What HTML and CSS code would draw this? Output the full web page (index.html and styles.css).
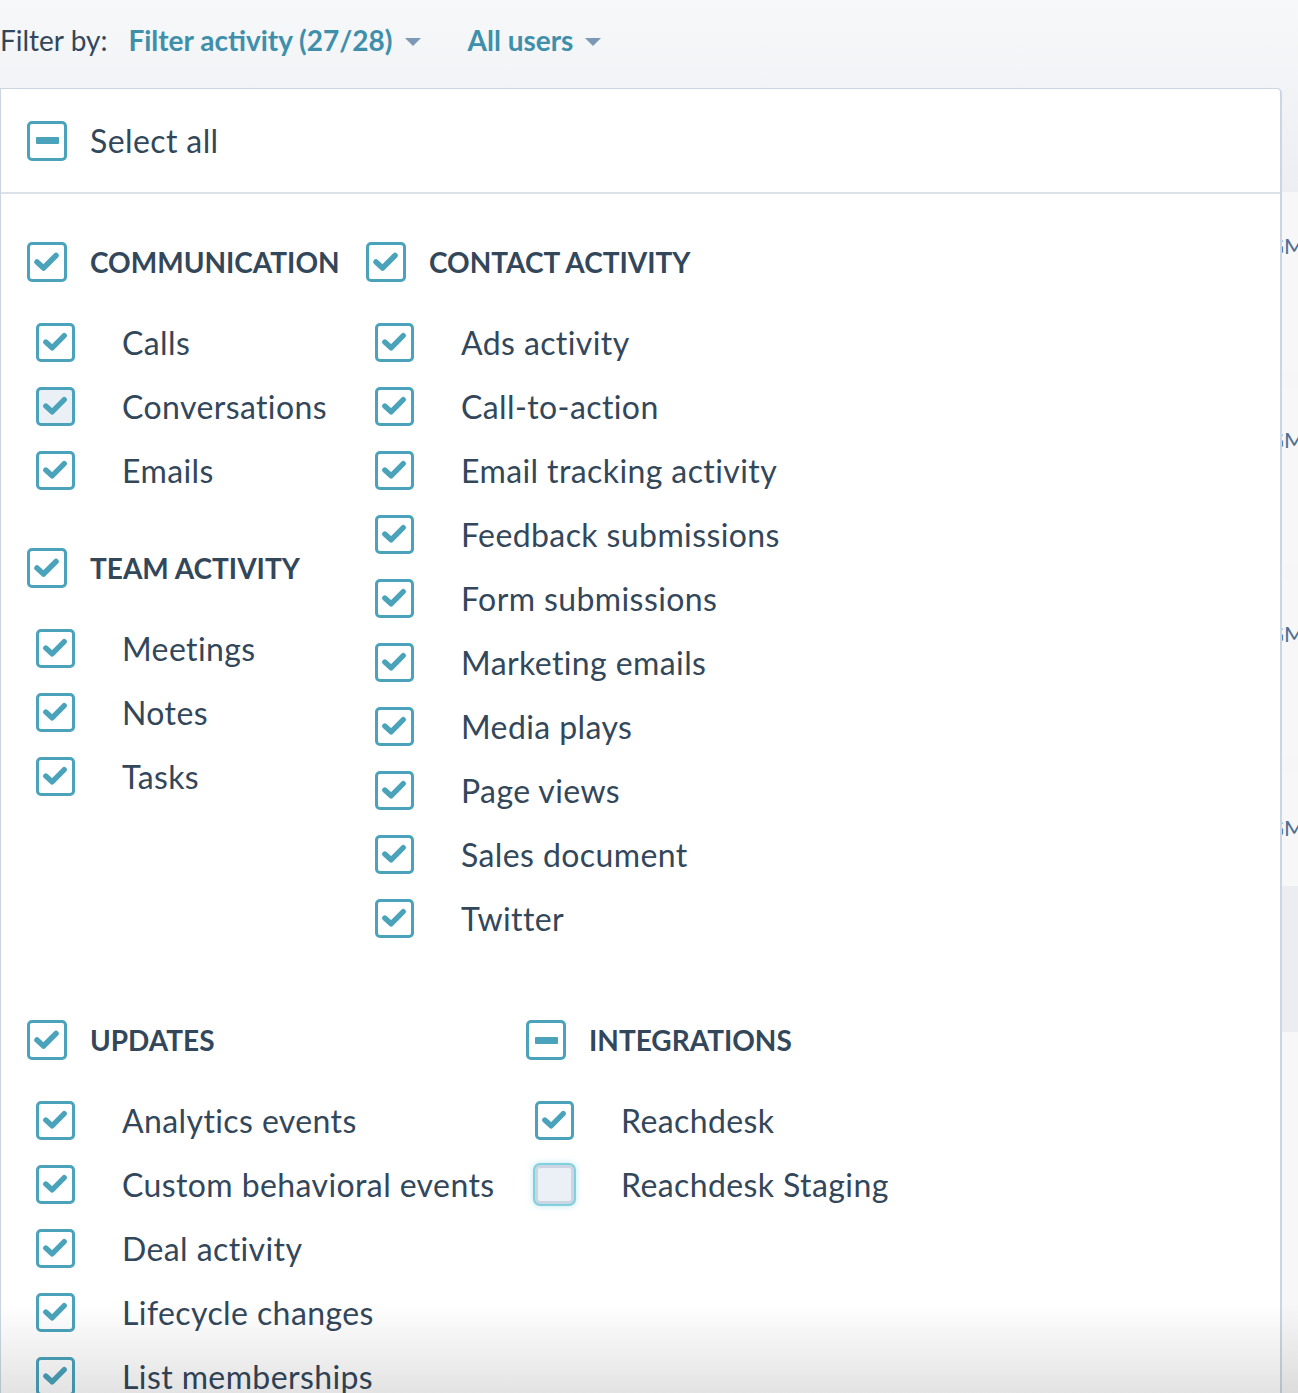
FILE: index.html
```html
<!DOCTYPE html>
<html lang="en">
<head>
    <meta charset="UTF-8">
    <meta name="viewport" content="width=device-width, initial-scale=1.0">
    <title>Activity filter</title>
    <link rel="stylesheet" href="styles.css">
</head>
<body>

    <!-- Filter Bar -->
    <div class="page-top">
        <div class="filter-bar">
            <span class="filter-label">Filter by:</span>
            <span class="filter-link">Filter activity (27/28) <span class="caret"></span></span>
            <span class="filter-link">All users <span class="caret"></span></span>
        </div>
    </div>

    <!-- Timeline behind the dropdown -->
    <div class="timeline">
        <div class="timeline-card"><span class="timeline-time">GMT</span></div>
        <div class="timeline-card"><span class="timeline-time">GMT</span></div>
        <div class="timeline-card"><span class="timeline-time">GMT</span></div>
        <div class="timeline-card timeline-card--short"><span class="timeline-time">GMT</span></div>
        <div class="timeline-month"></div>
        <div class="timeline-card timeline-card--tall"></div>
    </div>

    <!-- Filter Dropdown -->
    <div class="filter-panel">
        <div class="panel-header">
            <span class="checkbox checkbox--mixed"><span class="dash"></span></span>
            <span class="select-all">Select all</span>
        </div>

        <div class="panel-body">
            <div class="section section--top">
                <div class="column">
                    <div class="group">
                        <div class="group-header">
                            <span class="checkbox"><svg viewBox="0 0 34 34"><path d="M7 17 L13.5 23 L26 10.5"/></svg></span>
                            <span>Communication</span>
                        </div>
                        <ul class="group-items">
                            <li><span class="checkbox"><svg viewBox="0 0 34 34"><path d="M7 17 L13.5 23 L26 10.5"/></svg></span>Calls</li>
                            <li><span class="checkbox checkbox--hover"><svg viewBox="0 0 34 34"><path d="M7 17 L13.5 23 L26 10.5"/></svg></span>Conversations</li>
                            <li><span class="checkbox"><svg viewBox="0 0 34 34"><path d="M7 17 L13.5 23 L26 10.5"/></svg></span>Emails</li>
                        </ul>
                    </div>
                    <div class="group">
                        <div class="group-header">
                            <span class="checkbox"><svg viewBox="0 0 34 34"><path d="M7 17 L13.5 23 L26 10.5"/></svg></span>
                            <span>Team activity</span>
                        </div>
                        <ul class="group-items">
                            <li><span class="checkbox"><svg viewBox="0 0 34 34"><path d="M7 17 L13.5 23 L26 10.5"/></svg></span>Meetings</li>
                            <li><span class="checkbox"><svg viewBox="0 0 34 34"><path d="M7 17 L13.5 23 L26 10.5"/></svg></span>Notes</li>
                            <li><span class="checkbox"><svg viewBox="0 0 34 34"><path d="M7 17 L13.5 23 L26 10.5"/></svg></span>Tasks</li>
                        </ul>
                    </div>
                </div>

                <div class="column">
                    <div class="group">
                        <div class="group-header">
                            <span class="checkbox"><svg viewBox="0 0 34 34"><path d="M7 17 L13.5 23 L26 10.5"/></svg></span>
                            <span>Contact activity</span>
                        </div>
                        <ul class="group-items">
                            <li><span class="checkbox"><svg viewBox="0 0 34 34"><path d="M7 17 L13.5 23 L26 10.5"/></svg></span>Ads activity</li>
                            <li><span class="checkbox"><svg viewBox="0 0 34 34"><path d="M7 17 L13.5 23 L26 10.5"/></svg></span>Call-to-action</li>
                            <li><span class="checkbox"><svg viewBox="0 0 34 34"><path d="M7 17 L13.5 23 L26 10.5"/></svg></span>Email tracking activity</li>
                            <li><span class="checkbox"><svg viewBox="0 0 34 34"><path d="M7 17 L13.5 23 L26 10.5"/></svg></span>Feedback submissions</li>
                            <li><span class="checkbox"><svg viewBox="0 0 34 34"><path d="M7 17 L13.5 23 L26 10.5"/></svg></span>Form submissions</li>
                            <li><span class="checkbox"><svg viewBox="0 0 34 34"><path d="M7 17 L13.5 23 L26 10.5"/></svg></span>Marketing emails</li>
                            <li><span class="checkbox"><svg viewBox="0 0 34 34"><path d="M7 17 L13.5 23 L26 10.5"/></svg></span>Media plays</li>
                            <li><span class="checkbox"><svg viewBox="0 0 34 34"><path d="M7 17 L13.5 23 L26 10.5"/></svg></span>Page views</li>
                            <li><span class="checkbox"><svg viewBox="0 0 34 34"><path d="M7 17 L13.5 23 L26 10.5"/></svg></span>Sales document</li>
                            <li><span class="checkbox"><svg viewBox="0 0 34 34"><path d="M7 17 L13.5 23 L26 10.5"/></svg></span>Twitter</li>
                        </ul>
                    </div>
                </div>
            </div>

            <div class="section section--bottom">
                <div class="column">
                    <div class="group">
                        <div class="group-header">
                            <span class="checkbox"><svg viewBox="0 0 34 34"><path d="M7 17 L13.5 23 L26 10.5"/></svg></span>
                            <span>Updates</span>
                        </div>
                        <ul class="group-items">
                            <li><span class="checkbox"><svg viewBox="0 0 34 34"><path d="M7 17 L13.5 23 L26 10.5"/></svg></span>Analytics events</li>
                            <li><span class="checkbox"><svg viewBox="0 0 34 34"><path d="M7 17 L13.5 23 L26 10.5"/></svg></span>Custom behavioral events</li>
                            <li><span class="checkbox"><svg viewBox="0 0 34 34"><path d="M7 17 L13.5 23 L26 10.5"/></svg></span>Deal activity</li>
                            <li><span class="checkbox"><svg viewBox="0 0 34 34"><path d="M7 17 L13.5 23 L26 10.5"/></svg></span>Lifecycle changes</li>
                            <li><span class="checkbox"><svg viewBox="0 0 34 34"><path d="M7 17 L13.5 23 L26 10.5"/></svg></span>List memberships</li>
                        </ul>
                    </div>
                </div>

                <div class="column">
                    <div class="group">
                        <div class="group-header">
                            <span class="checkbox checkbox--mixed"><span class="dash"></span></span>
                            <span>Integrations</span>
                        </div>
                        <ul class="group-items">
                            <li><span class="checkbox"><svg viewBox="0 0 34 34"><path d="M7 17 L13.5 23 L26 10.5"/></svg></span>Reachdesk</li>
                            <li><span class="checkbox checkbox--empty"></span>Reachdesk Staging</li>
                        </ul>
                    </div>
                </div>
            </div>
        </div>
    </div>

    <!-- scroll shade at the bottom -->
    <div class="bottom-shade"></div>

</body>
</html>
```

FILE: styles.css
```css
/* Basic Styles */
body {
    font-family: Lato, "Open Sans", sans-serif;
    margin: 0;
    padding: 0;
    background-color: #f6f6f7;
    color: #33475b;
    height: 1393px;
    overflow: hidden;
    position: relative;
}

/* Filter Bar */
.page-top {
    height: 192px;
    background: linear-gradient(#f6f8fa, #eceef1);
}

.filter-bar {
    display: flex;
    align-items: center;
    height: 80px;
    font-size: 28px;
}

.filter-label {
    margin-left: 0;
    margin-right: 21px;
}

.filter-link {
    color: #3f8fab;
    font-weight: 700;
    margin-right: 47px;
    display: flex;
    align-items: center;
}

.caret {
    display: inline-block;
    width: 0;
    height: 0;
    margin-left: 12px;
    margin-top: 3px;
    border-left: 8px solid transparent;
    border-right: 8px solid transparent;
    border-top: 8px solid #7c98b6;
}

/* Timeline (behind the dropdown) */
.timeline-card {
    height: 178px;
    margin-bottom: 16px;
    background-color: #f7f7f8;
    position: relative;
}

.timeline-card--short {
    height: 112px;
    margin-bottom: 0;
}

.timeline-card--tall {
    height: 400px;
    margin-bottom: 0;
}

.timeline-month {
    height: 146px;
    background-color: #ecedf0;
}

.timeline-time {
    position: absolute;
    top: 40px;
    left: 1268px;
    font-size: 22px;
    color: #516f90;
}

/* Filter Dropdown */
.filter-panel {
    position: absolute;
    top: 88px;
    left: 0;
    width: 1279px;
    height: 1400px;
    background-color: #fff;
    border: 1px solid #cbd6e2;
    border-right-width: 2px;
    border-radius: 0 5px 0 0;
}

.panel-header {
    display: flex;
    align-items: center;
    height: 105px;
    padding-left: 26px;
    border-bottom: 2px solid #dbe2ea;
    box-sizing: border-box;
}

.select-all {
    font-size: 32px;
    letter-spacing: 0.4px;
    margin-left: 23px;
}

.panel-body {
    padding: 36px 0 0 26px;
}

.section {
    display: flex;
}

.section--top .column:first-child {
    width: 339px;
}

.section--bottom {
    margin-top: 58px;
}

.section--bottom .column:first-child {
    width: 499px;
}

.group + .group {
    margin-top: 34px;
}

.group-header {
    display: flex;
    align-items: center;
    gap: 23px;
    height: 64px;
    font-size: 28px;
    font-weight: 700;
    text-transform: uppercase;
}

.group-items {
    list-style: none;
    margin: 16px 0 0;
    padding: 0;
}

.group-items li {
    display: flex;
    align-items: center;
    gap: 47px;
    height: 64px;
    padding-left: 9px;
    font-size: 32px;
    letter-spacing: 0.4px;
}

/* Checkboxes */
.checkbox {
    box-sizing: border-box;
    width: 40px;
    height: 40px;
    border: 3px solid #4aa3bb;
    border-radius: 5px;
    background-color: #fff;
    display: flex;
    align-items: center;
    justify-content: center;
    flex-shrink: 0;
}

.group-items .checkbox {
    width: 39px;
    height: 39px;
}

.checkbox svg {
    width: 34px;
    height: 34px;
    fill: none;
    stroke: #4aa3bb;
    stroke-width: 5.5;
    stroke-linecap: round;
    stroke-linejoin: round;
}

.checkbox--hover {
    background-color: #eaf0f6;
}

.checkbox--empty {
    background-color: #eaf0f6;
    border: 3px solid #cbd6e2;
    box-shadow: 0 0 0 2px #7fd1de, 0 0 6px 2px rgba(127, 209, 222, 0.5);
}

.checkbox--mixed .dash {
    width: 23px;
    height: 7px;
    border-radius: 1px;
    background-color: #4aa3bb;
}

/* Scroll shade */
.bottom-shade {
    position: absolute;
    left: 0;
    right: 0;
    bottom: 0;
    height: 90px;
    background: linear-gradient(rgba(0, 0, 0, 0), rgba(0, 0, 0, 0.11));
    pointer-events: none;
}
```
